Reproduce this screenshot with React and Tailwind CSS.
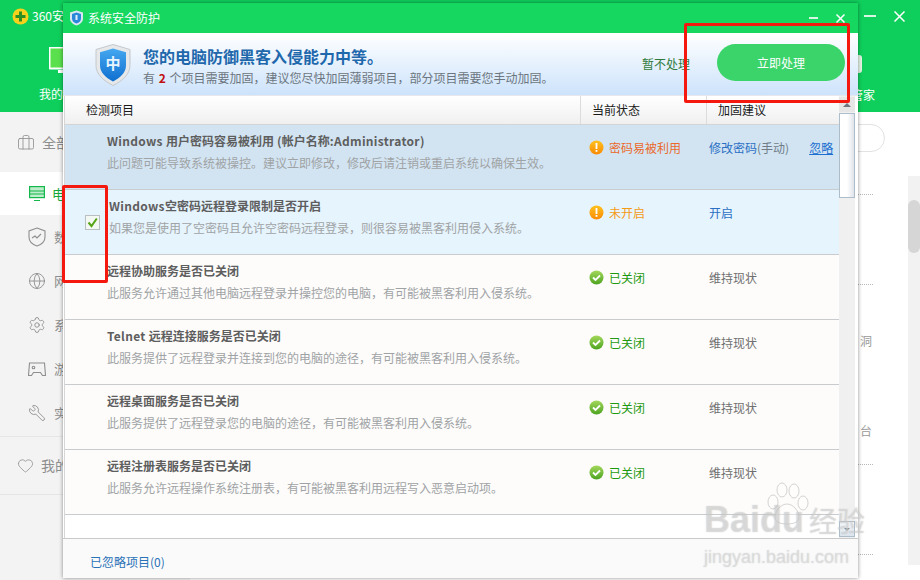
import React from 'react';
import { Briefcase, Globe, Settings, Wrench, Heart } from 'lucide-react';

const rows = [
  { title: 'Windows 用户密码容易被利用 (帐户名称:Administrator)', desc: '此问题可能导致系统被操控。建议立即修改，修改后请注销或重启系统以确保生效。', status: '密码易被利用', level: 'danger', advice: '修改密码', manual: '(手动)', ignore: true, bg: 'bg-[#d2e4f2]' },
  { title: 'Windows空密码远程登录限制是否开启', desc: '如果您是使用了空密码且允许空密码远程登录，则很容易被黑客利用侵入系统。', status: '未开启', level: 'warn', advice: '开启', checked: true, bg: 'bg-[#e6f4fd]' },
  { title: '远程协助服务是否已关闭', desc: '此服务允许通过其他电脑远程登录并操控您的电脑，有可能被黑客利用入侵系统。', status: '已关闭', level: 'ok', keep: true, bg: 'bg-[#fdfcfb]' },
  { title: 'Telnet 远程连接服务是否已关闭', desc: '此服务提供了远程登录并连接到您的电脑的途径，有可能被黑客利用入侵系统。', status: '已关闭', level: 'ok', keep: true, bg: 'bg-[#fdfcfb]' },
  { title: '远程桌面服务是否已关闭', desc: '此服务提供了远程登录您的电脑的途径，有可能被黑客利用入侵系统。', status: '已关闭', level: 'ok', keep: true, bg: 'bg-[#fdfcfb]' },
  { title: '远程注册表服务是否已关闭', desc: '此服务允许远程操作系统注册表，有可能被黑客利用远程写入恶意启动项。', status: '已关闭', level: 'ok', keep: true, bg: 'bg-[#fdfcfb]' },
];

function PulseShield() {
  return (
    <svg width="18" height="20" viewBox="0 0 18 20" fill="none" stroke="currentColor" strokeWidth="1.1">
      <path d="M9 1l8 3v6c0 4-3.500 7.500-8 9-4.500-1.500-8-5-8-9V4z" />
      <path d="M4 11l3-2 2 2 4-4" />
    </svg>
  );
}

function Pad() {
  return (
    <svg width="18" height="15" viewBox="0 0 18 15" fill="none" stroke="currentColor" strokeWidth="1.1">
      <path d="M1.500 1h15l1 12.500h-3l-2-3h-7l-2 3h-3z" />
      <circle cx="5.500" cy="5.500" r="1.300" />
      <path d="M11.500 4.500h.1M13.500 6.500h.1" />
    </svg>
  );
}

const sideItems = [
  { label: '数', icon: <PulseShield /> },
  { label: '网', icon: <Globe size={18} strokeWidth={1.2} /> },
  { label: '系', icon: <Settings size={18} strokeWidth={1.2} /> },
  { label: '游', icon: <Pad /> },
  { label: '实', icon: <Wrench size={18} strokeWidth={1.2} className="-scale-x-100" /> },
];

function StatusIcon({ level }) {
  if (level === 'ok') {
    return (
      <svg width="15" height="15" viewBox="0 0 15 15" className="shrink-0">
        <defs>
          <linearGradient id="okFill" x1="0" y1="0" x2="0" y2="1">
            <stop offset="0" stopColor="#a4d85c" />
            <stop offset="1" stopColor="#4da320" />
          </linearGradient>
        </defs>
        <circle cx="7.500" cy="7.500" r="7" fill="url(#okFill)" />
        <path d="M4 7.500l2.500 2.500L11 5.500" fill="none" stroke="#fff" strokeWidth="1.800" />
      </svg>
    );
  }
  return (
    <svg width="15" height="15" viewBox="0 0 15 15" className="shrink-0">
      <defs>
        <linearGradient id="warnFill" x1="0" y1="0" x2="0" y2="1">
          <stop offset="0" stopColor="#ffc21f" />
          <stop offset="1" stopColor="#f98a05" />
        </linearGradient>
      </defs>
      <circle cx="7.500" cy="7.500" r="7" fill="url(#warnFill)" />
      <rect x="6.600" y="3" width="1.800" height="6" fill="#fff" />
      <rect x="6.600" y="10" width="1.800" height="1.800" fill="#fff" />
    </svg>
  );
}

const statusColor = { danger: 'text-[#ea6a2c]', warn: 'text-[#f59a14]', ok: 'text-[#1d9a10]' };

// les mots latins sont plus larges dans la capture
function Title({ text }) {
  return text.split(/([ -~]+)/).map((part, i) => (
    <span key={i} className={i % 2 ? 'tracking-[0.3px]' : ''}>{part}</span>
  ));
}

function Row({ row }) {
  return (
    <div className={`grid grid-cols-[515px_126px_1fr] h-[65px] shrink-0 border-b border-[#c8cccf] ${row.bg}`}>
      <div className="flex">
        <div className="w-[42px] shrink-0 flex justify-end pt-[25px] pr-[7px]">
          {row.checked && (
            <div className="w-[15px] h-[15px] bg-[#f4f8f2] border border-[#b9bfc2] flex items-center justify-center">
              <svg width="11" height="11" viewBox="0 0 11 11">
                <path d="M1.500 5.500l3 3.500L9.800 1.500" fill="none" stroke="#55a416" strokeWidth="2" />
              </svg>
            </div>
          )}
        </div>
        <div className={`pt-[7px] ${row.checked ? 'pl-[2px]' : ''}`}>
          <div className="text-[12px] leading-[17px] font-bold text-[#5e5e5e] whitespace-nowrap"><Title text={row.title} /></div>
          <div className="text-[12px] leading-[17px] mt-[5px] text-[#a0a3a5] whitespace-nowrap">{row.desc}</div>
        </div>
      </div>
      <div className={`flex items-start gap-[5px] pl-[9px] pt-[15px] text-[12px] leading-[16px] ${statusColor[row.level]}`}>
        <StatusIcon level={row.level} />
        <span>{row.status}</span>
      </div>
      <div className="flex items-start pl-[3px] pt-[15px] text-[12px] leading-[16px] whitespace-nowrap">
        {row.keep ? (
          <span className="text-[#6f6f6f]">维持现状</span>
        ) : (
          <span className="text-[#2b6fc4]">
            {row.advice}
            {row.manual && <span className="text-[#6f7c88]">{row.manual}</span>}
          </span>
        )}
        {row.ignore && <span className="ml-[20px] text-[#1a6fd0] underline">忽略</span>}
      </div>
    </div>
  );
}

function ScrollBar() {
  return (
    <div className="w-[16px] shrink-0 bg-[#f0f0f0] flex flex-col">
      <div className="h-[15px] mt-px flex items-center justify-center bg-[#e6e6e6]">
        <div className="w-0 h-0 border-x-[4px] border-x-transparent border-b-[4px] border-b-[#6d7680]" />
      </div>
      <div className="h-[85px] mt-px bg-gradient-to-r from-white via-white to-[#dfe3ea] border border-[#aebdca]" />
      <div className="flex-1" />
      <div className="h-[16px] mb-px flex items-center justify-center bg-gradient-to-b from-[#f4f7fa] to-[#dbe4ec] border border-[#aebdca]">
        <div className="w-0 h-0 border-x-[3px] border-x-transparent border-t-[3px] border-t-[#8a939c]" />
      </div>
    </div>
  );
}

function Modal() {
  return (
    <div className="absolute left-[63px] top-[3px] w-[795px] h-[575px] bg-white flex flex-col shadow-[0_0_4px_rgba(0,0,0,0.45)]">
      <div className="h-[30px] shrink-0 bg-[#16d860] flex items-center pl-[6px] pr-[13px] text-white">
        <svg width="15" height="16" viewBox="0 0 15 16">
          <path d="M7.500 0.500l6.500 2v6c0 3.500-3 5.800-6.500 7-3.500-1.200-6.500-3.500-6.500-7v-6z" fill="#d8e6f2" />
          <path d="M7.500 2.500l4.500 1.400v4.500c0 2.500-2 4.200-4.500 5.200-2.500-1-4.500-2.700-4.500-5.200V3.900z" fill="#2a88d8" />
          <rect x="6.500" y="5" width="2" height="5" fill="#dff0ff" />
        </svg>
        <span className="ml-[4px] text-[12px]">系统安全防护</span>
        <div className="ml-auto flex items-center gap-[18px]">
          <div className="w-[9px] h-[2px] bg-[#d8f7e3]" />
          <svg width="9" height="9" viewBox="0 0 9 9">
            <path d="M0.500 0.500l8 8M8.500 0.500l-8 8" stroke="#fff" strokeWidth="1.500" />
          </svg>
        </div>
      </div>

      <div className="h-[62px] shrink-0 flex items-center pl-[32px] pr-[13px] bg-gradient-to-b from-white to-[#cde3fb]">
        <svg width="36" height="42" viewBox="0 0 36 42" className="shrink-0 mt-[2px]">
          <defs>
            <linearGradient id="bigShield" x1="0" y1="0" x2="0" y2="1">
              <stop offset="0" stopColor="#46a8f0" />
              <stop offset="1" stopColor="#0f6fd0" />
            </linearGradient>
          </defs>
          <path d="M18 0.500l17 5v16c0 9-8 15.500-17 20C9 37 1 30.500 1 21.500v-16z" fill="#e6e8ea" stroke="#c4c8cc" />
          <path d="M18 4.500l13 3.800v13.200c0 7-6 12.300-13 16-7-3.700-13-9-13-16V8.300z" fill="url(#bigShield)" />
          <text x="18" y="25" textAnchor="middle" fontSize="15" fontWeight="700" fill="#e8f5ff" fontFamily='"Noto Sans CJK SC", sans-serif'>中</text>
        </svg>
        <div className="ml-[12px] mt-[4px]">
          <div className="text-[16px] leading-[22px] font-bold text-[#1f68ac] whitespace-nowrap">您的电脑防御黑客入侵能力中等。</div>
          <div className="text-[12px] leading-[18px] mt-[2px] text-[#6c7680] whitespace-nowrap">
            有 <b className="text-[#c01010] mx-[1px]">2</b> 个项目需要加固，建议您尽快加固薄弱项目，部分项目需要您手动加固。
          </div>
        </div>
        <span className="ml-auto text-[12px] text-[#2f7a3c] whitespace-nowrap">暂不处理</span>
        <div className="ml-[27px] -mt-[3px] w-[128px] h-[37px] rounded-full bg-[#3ad46a] text-white text-[12px] flex items-center justify-center">立即处理</div>
      </div>

      <div className="flex-1 min-h-0 flex pl-[1px] pr-[3px] border-t border-[#e4e8ec]">
        <div className="flex-1 min-w-0 flex flex-col border-l border-[#d6d6d6]">
          <div className="h-[29px] shrink-0 grid grid-cols-[515px_126px_1fr] bg-gradient-to-b from-white to-[#f0f0f0] border-b border-[#d4d4d4] text-[12px] text-[#1a1a1a] leading-[27px]">
            <div className="pl-[21px]">检测项目</div>
            <div className="pl-[11px] border-l border-[#dcdcdc]">当前状态</div>
            <div className="pl-[11px] border-l border-[#dcdcdc]">加固建议</div>
          </div>
          {rows.map(row => <Row key={row.title} row={row} />)}
          <div className="flex-1 bg-white" />
        </div>
        <ScrollBar />
      </div>

      <div className="h-[40px] shrink-0 bg-[#fafafa] border-t border-[#c9c9c9] flex items-center pl-[27px] pt-[6px] text-[12px] text-[#2a72b8]">已忽略项目(0)</div>
    </div>
  );
}

function Background() {
  return (
    <div className="w-[920px] h-[580px] flex flex-col overflow-hidden bg-white">
      <div className="h-[112px] shrink-0 bg-[#0fcf5c] text-white flex flex-col">
        <div className="h-[32px] shrink-0 flex items-center pl-[12px] pr-[15px]">
          <svg width="17" height="17" viewBox="0 0 17 17">
            <circle cx="8.500" cy="8.500" r="8" fill="#f7d21c" />
            <path d="M7 3.500h3v3.500h3.500v3H10v3.500H7V10H3.500V7H7z" fill="#2e8f22" />
          </svg>
          <span className="ml-[3px] text-[12px] whitespace-nowrap">360安</span>
          <div className="ml-auto flex items-center gap-[18px]">
            <div className="w-[12px] h-[2px] bg-[#d8f7e3]" />
            <svg width="11" height="11" viewBox="0 0 11 11">
              <path d="M0.500 0.500l10 10M10.500 0.500l-10 10" stroke="#fff" strokeWidth="1.500" />
            </svg>
          </div>
        </div>
        <div className="flex-1 flex items-start pl-[39px] pr-[45px]">
          <div className="flex flex-col items-start">
            <svg width="30" height="30" viewBox="0 0 30 30" className="ml-[10px] mt-[15px]">
              <rect x="0.500" y="0.500" width="29" height="21" rx="1" fill="#59e04c" stroke="#fff" strokeWidth="2" />
              <rect x="9" y="23" width="12" height="3" fill="#fff" />
            </svg>
            <span className="text-[12px] leading-[16px] mt-[9px]">我的电脑</span>
          </div>
          <div className="ml-auto flex flex-col items-end">
            <div className="w-[24px] h-[18px] mt-[23px] mr-[13px] rounded-[3px] bg-[#e6f5e6]" />
            <span className="text-[12px] leading-[16px] mt-[14px]">管家</span>
          </div>
        </div>
      </div>

      <div className="flex-1 min-h-0 flex">
        <div className="w-[190px] shrink-0 bg-[#f3f3f3] flex flex-col text-[#8e8e8e]">
          <div className="h-[60px] shrink-0 flex items-center pl-[17px] pt-[1px] gap-[7px] text-[14px]">
            <Briefcase size={18} strokeWidth={1.1} />
            <span>全部工具</span>
          </div>
          <div className="h-[43px] shrink-0 bg-white flex items-center pl-[29px] gap-[7px] text-[13px] text-[#14a83c]">
            <svg width="16" height="16" viewBox="0 0 16 16" fill="#bfeccb" stroke="#14b84a" strokeWidth="1.200">
              <rect x="0.600" y="0.600" width="14.800" height="11" />
              <path d="M0.600 5h14.800M0.600 8h14.800M5 14.500h6" fill="none" />
            </svg>
            <span>电脑安全</span>
          </div>
          <div className="flex flex-col">
            {sideItems.map(item => (
              <div key={item.label} className="h-[44px] flex items-center pl-[28px] gap-[8px] text-[13px]">
                <span className="w-[18px] flex justify-center">{item.icon}</span>
                <span>{item.label}</span>
              </div>
            ))}
          </div>
          <div className="h-[59px] mt-[1px] shrink-0 border-y border-[#e6e6e6] flex items-center pl-[17px] gap-[7px] text-[14px]">
            <Heart size={17} strokeWidth={1.1} />
            <span>我的工具</span>
          </div>
        </div>

        <div className="flex-1 min-w-0 flex justify-end">
          <div className="flex-1 min-w-0 flex flex-col items-end text-[#9a9a9a] text-[12px]">
            <div className="h-[28px] w-[300px] mt-[12px] mr-[23px] rounded-full border border-[#e2e2e2] shrink-0" />
            <div className="mr-[35px] w-[15px] mt-[42px] border-t border-dotted border-[#b9b9b9]" />
            <div className="mr-[35px] w-[15px] mt-[89px] border-t border-dotted border-[#b9b9b9]" />
            <div className="mr-[36px] leading-[16px] mt-[48px]">洞</div>
            <div className="mr-[36px] leading-[16px] mt-[74px]">台</div>
            <div className="mr-[35px] w-[15px] mt-[25px] border-t border-dotted border-[#b9b9b9]" />
            <div className="mr-[35px] w-[15px] mt-[89px] border-t border-dotted border-[#b9b9b9]" />
          </div>
          <div className="w-[12px] mt-[64px] h-[389px] shrink-0 bg-[#f2f2f2] pt-[24px]">
            <div className="h-[53px] rounded-md bg-[#d6d6d6]" />
          </div>
        </div>
      </div>
    </div>
  );
}

function Watermark() {
  return (
    <div className="absolute left-[704px] top-[482px] w-[170px] h-[88px] pointer-events-none">
      <svg width="50" height="44" viewBox="0 0 46 44" className="absolute left-[58px] top-0" fill="rgba(255,255,255,0.4)" stroke="rgba(150,150,150,0.4)">
        <ellipse cx="9" cy="20" rx="5" ry="7" />
        <ellipse cx="18" cy="8" rx="5" ry="7" />
        <ellipse cx="30" cy="9" rx="5" ry="7" />
        <ellipse cx="39" cy="21" rx="5" ry="7" />
        <path d="M23 22c6 0 12 7 12 13 0 5-5 7-12 7s-12-2-12-7c0-6 6-13 12-13z" />
      </svg>
      <div className="absolute left-0 top-[18px] text-[36px] leading-[40px] font-bold text-white/40 [text-shadow:0_0_1px_rgba(130,130,130,0.5)] font-['Liberation_Sans',sans-serif] whitespace-nowrap">Baidu</div>
      <div className="absolute left-[105px] top-[21px] text-[28px] leading-[34px] text-white/40 [text-shadow:0_0_1px_rgba(130,130,130,0.5)] whitespace-nowrap">经验</div>
      <div className="absolute left-0 top-[64px] text-[18px] leading-[22px] text-white/40 [text-shadow:0_0_1px_rgba(130,130,130,0.5)] font-['Liberation_Sans',sans-serif] whitespace-nowrap">jingyan.baidu.com</div>
    </div>
  );
}

export default function App() {
  return (
    <div className="relative w-[920px] h-[580px] overflow-hidden font-['Noto_Sans_CJK_SC','Noto_Sans',sans-serif]">
      <Background />
      <Modal />
      <div className="absolute left-[684px] top-[23px] w-[166px] h-[80px] border-[3px] border-[#f5180f] rounded-[2px]" />
      <div className="absolute left-[62px] top-[185px] w-[46px] h-[98px] border-[3px] border-[#f5180f] rounded-[2px]" />
      <Watermark />
    </div>
  );
}
